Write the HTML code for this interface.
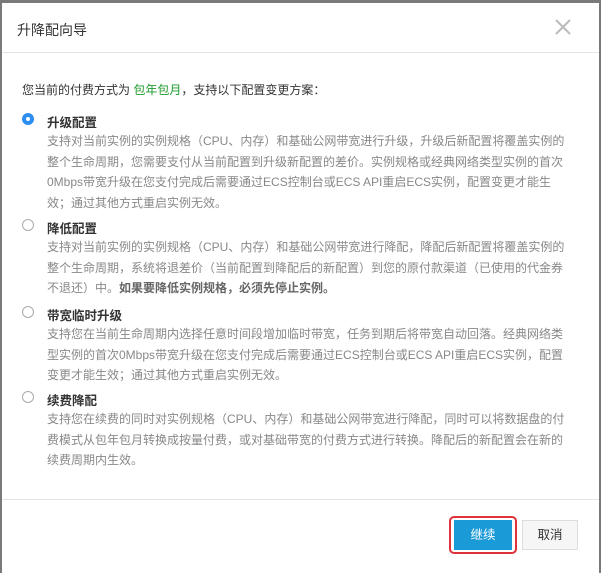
<!DOCTYPE html>
<html><head><meta charset="utf-8"><style>
body{margin:0;width:601px;height:573px;background:#7a7a7a;font-family:"Liberation Sans","Noto Sans CJK SC",sans-serif;position:relative;overflow:hidden}
.dlg{position:absolute;left:2px;top:3px;width:597px;height:570px;background:#fff}
.hd{position:absolute;left:0;top:0;right:0;height:49px;border-bottom:1px solid #e5e5e5}
.hd .t{position:absolute;left:15px;top:17px;font-size:14px;color:#333}
.x{position:absolute;left:553px;top:16px}
.intro{position:absolute;left:20px;top:78px;font-size:12px;color:#333}
.g{color:#1e9b2e}
.item{position:absolute;left:20px;width:560px}
.r{position:absolute;left:0;top:1px;width:12px;height:12px;border:1px solid #aaa;border-radius:50%;box-sizing:border-box}
.r.on{border:4px solid #2b8ef0;background:#fff}
.it{position:absolute;left:25px;top:0;font-size:12.5px;font-weight:bold;color:#333}
.id{position:absolute;left:25px;top:19px;width:522px;font-size:12px;line-height:20.6px;color:#888}
.id b{color:#666}
.ft{position:absolute;left:0;right:0;top:496px;border-top:1px solid #e5e5e5}
.ok{position:absolute;left:447px;top:513px;width:68px;height:38px;border:2px solid #e0323a;border-radius:5px;box-sizing:border-box}
.ok div{position:absolute;left:3px;top:2px;width:58px;height:30px;background:#1a9ad6;color:#fff;font-size:12.5px;text-align:center;line-height:30px}
.cn{position:absolute;left:520px;top:517px;width:56px;height:30px;background:#f6f6f6;border:1px solid #ddd;box-sizing:border-box;color:#333;font-size:12.5px;text-align:center;line-height:28px}
</style></head><body>
<div class="dlg">
<div class="hd"><div class="t">升降配向导</div>
<svg class="x" width="16" height="16"><path d="M1 1L15 15M15 1L1 15" stroke="#bbb" stroke-width="2"/></svg></div>
<div class="intro">您当前的付费方式为 <span class="g">包年包月</span>，支持以下配置变更方案：</div>
<div class="item" style="top:109px"><div class="r on"></div><div class="it">升级配置</div><div class="id">支持对当前实例的实例规格（CPU、内存）和基础公网带宽进行升级，升级后新配置将覆盖实例的整个生命周期，您需要支付从当前配置到升级新配置的差价。实例规格或经典网络类型实例的首次0Mbps带宽升级在您支付完成后需要通过ECS控制台或ECS API重启ECS实例，配置变更才能生效；通过其他方式重启实例无效。</div></div>
<div class="item" style="top:215px"><div class="r"></div><div class="it">降低配置</div><div class="id">支持对当前实例的实例规格（CPU、内存）和基础公网带宽进行降配，降配后新配置将覆盖实例的整个生命周期，系统将退差价（当前配置到降配后的新配置）到您的原付款渠道（已使用的代金券不退还）中。<b>如果要降低实例规格，必须先停止实例。</b></div></div>
<div class="item" style="top:302px"><div class="r"></div><div class="it">带宽临时升级</div><div class="id">支持您在当前生命周期内选择任意时间段增加临时带宽，任务到期后将带宽自动回落。经典网络类型实例的首次0Mbps带宽升级在您支付完成后需要通过ECS控制台或ECS API重启ECS实例，配置变更才能生效；通过其他方式重启实例无效。</div></div>
<div class="item" style="top:387px"><div class="r"></div><div class="it">续费降配</div><div class="id">支持您在续费的同时对实例规格（CPU、内存）和基础公网带宽进行降配，同时可以将数据盘的付费模式从包年包月转换成按量付费，或对基础带宽的付费方式进行转换。降配后的新配置会在新的续费周期内生效。</div></div>
<div class="ft"></div>
<div class="ok"><div>继续</div></div>
<div class="cn">取消</div>
</div>
</body></html>
